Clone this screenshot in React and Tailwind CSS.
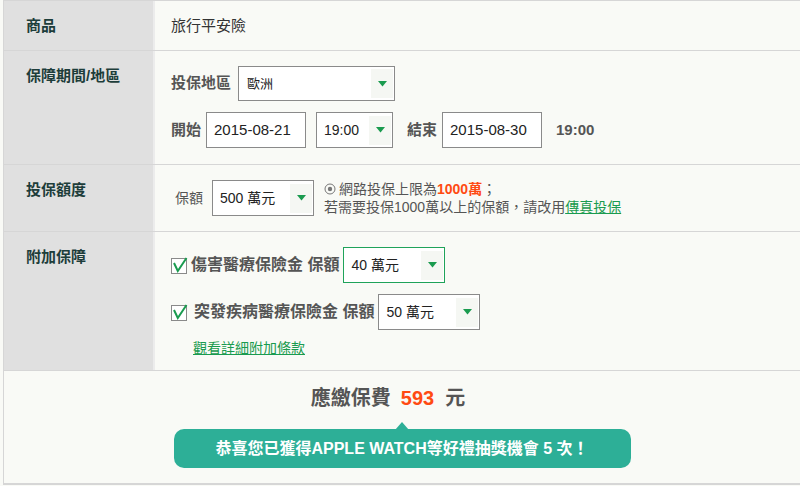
import React from "react";

const FONT = { fontFamily: '"Liberation Sans", "Noto Sans CJK TC", sans-serif' };

function Arrow() {
  return (
    <div className="flex h-[29px] w-[22px] items-center justify-center self-center bg-[#f5f7f3]">
      <svg width="9" height="6" viewBox="0 0 9 6">
        <polygon points="0,0 9,0 4.5,5.5" fill="#1a9b4f" />
      </svg>
    </div>
  );
}

function Select({ value, w, h = "h-[36px]", green = false, text = "text-[14px]", pl = "pl-[7px]" }) {
  return (
    <div
      className={`flex ${w} ${h} items-stretch border bg-white ${
        green ? "border-[#1fa35a]" : "border-[#8a8a8a]"
      }`}
    >
      <div className={`flex flex-1 items-center ${pl} ${text} text-[#222]`}>{value}</div>
      <div className="flex items-center pr-[1px]">
        <Arrow />
      </div>
    </div>
  );
}

function Input({ value }) {
  return (
    <div className="flex h-[36px] w-[100px] items-center border border-[#8a8a8a] bg-white pl-[7px] text-[15px] text-[#222]">
      {value}
    </div>
  );
}

function Check() {
  return (
    <svg width="18" height="17" viewBox="0 0 18 17" className="shrink-0">
      <rect x="0.5" y="1.5" width="15" height="15" fill="white" stroke="#8a8a8a" />
      <polyline points="3,6 6.8,14 15.5,1" fill="none" stroke="#1a9b4f" strokeWidth="2" strokeLinejoin="miter" />
    </svg>
  );
}

function Row({ label, children, className = "" }) {
  return (
    <div className={`flex border-b border-[#d6d6d6] ${className}`}>
      <div className="w-[151px] shrink-0 border-r-2 border-[#ececec] bg-[#e0e0e0] pl-[22px] pt-[14px] text-[15px] font-bold leading-[22px] text-[#1d3d3a]">
        {label}
      </div>
      <div className="flex-1 bg-[#f9faf6]">{children}</div>
    </div>
  );
}

export default function App() {
  return (
    <div className="h-[486px] w-[800px] overflow-hidden bg-[#f9faf6]" style={FONT}>
      <div className="ml-[3px] border-b-2 border-l border-t border-[#d6d6d6]">
        <Row label="商品" className="h-[50px]">
          <div className="pl-[16px] pt-[14px] text-[15px] leading-[22px] text-[#333]">旅行平安險</div>
        </Row>

        <Row label="保障期間/地區" className="h-[114px]">
          <div className="flex flex-col gap-[11px] pl-[16px] pt-[15px]">
            <div className="flex items-center gap-[7px]">
              <span className="text-[15px] font-bold text-[#555]">投保地區</span>
              <Select value="歐洲" w="w-[157px]" h="h-[35px]" text="text-[13px]" pl="pl-[8px]" />
            </div>
            <div className="flex items-center">
              <span className="mr-[5px] text-[15px] font-bold text-[#555]">開始</span>
              <Input value="2015-08-21" />
              <div className="ml-[10px]">
                <Select value="19:00" w="w-[77px]" />
              </div>
              <span className="ml-[14px] mr-[5px] text-[15px] font-bold text-[#555]">結束</span>
              <Input value="2015-08-30" />
              <span className="ml-[14px] text-[15px] font-bold text-[#555]">19:00</span>
            </div>
          </div>
        </Row>

        <Row label="投保額度" className="h-[67px]">
          <div className="flex items-center pl-[20px] pt-[15px]">
            <span className="mr-[9px] text-[14px] text-[#555]">保額</span>
            <Select value="500 萬元" w="w-[102px]" />
            <div className="ml-[10px] text-[14px] leading-[18px] text-[#555]">
              <div className="flex items-center">
                <svg width="12" height="12" viewBox="0 0 12 12" className="mr-[3px]">
                  <circle cx="6" cy="6" r="5" fill="none" stroke="#777" strokeWidth="1" />
                  <circle cx="6" cy="6" r="2.2" fill="#777" />
                </svg>
                <span>網路投保上限為</span>
                <span className="font-bold text-[#ff4a12]">1000萬</span>
                <span>；</span>
              </div>
              <div>
                若需要投保1000萬以上的保額，請改用
                <span className="text-[#1a9b4f] underline">傳真投保</span>
              </div>
            </div>
          </div>
        </Row>

        <Row label="附加保障" className="h-[139px]">
          <div className="flex flex-col pl-[16px] pt-[15px]">
            <div className="flex items-center">
              <Check />
              <span className="ml-[2px] mr-[4px] text-[16px] font-bold text-[#555]">傷害醫療保險金 保額</span>
              <Select value="40 萬元" w="w-[102px]" green />
            </div>
            <div className="mt-[11px] flex items-center">
              <Check />
              <span className="ml-[5px] mr-[4px] text-[16px] font-bold text-[#555]">突發疾病醫療保險金 保額</span>
              <Select value="50 萬元" w="w-[102px]" />
            </div>
            <div className="ml-[22px] mt-[8px] text-[14px] leading-[20px] text-[#1a9b4f] underline">觀看詳細附加條款</div>
          </div>
        </Row>

        <div className="flex h-[112px] flex-col items-center bg-[#f9faf6] pt-[13px]">
          <div className="flex items-center pr-[28px] text-[20px] font-bold leading-[28px] text-[#555]">
            <span>應繳保費</span>
            <span className="ml-[10px] text-[#ff4a12]">593</span>
            <span className="ml-[11px]">元</span>
          </div>
          <div className="relative mt-[17px] flex h-[39px] w-[457px] items-center justify-center rounded-[10px] bg-[#2daf97] text-[16px] font-bold text-white">
            <svg width="14" height="8" viewBox="0 0 14 8" className="absolute left-[221px] top-[-7px]">
              <polygon points="0,8 7,0 14,8" fill="#2daf97" />
            </svg>
            恭喜您已獲得APPLE WATCH等好禮抽獎機會 5 次！
          </div>
        </div>
      </div>
    </div>
  );
}
